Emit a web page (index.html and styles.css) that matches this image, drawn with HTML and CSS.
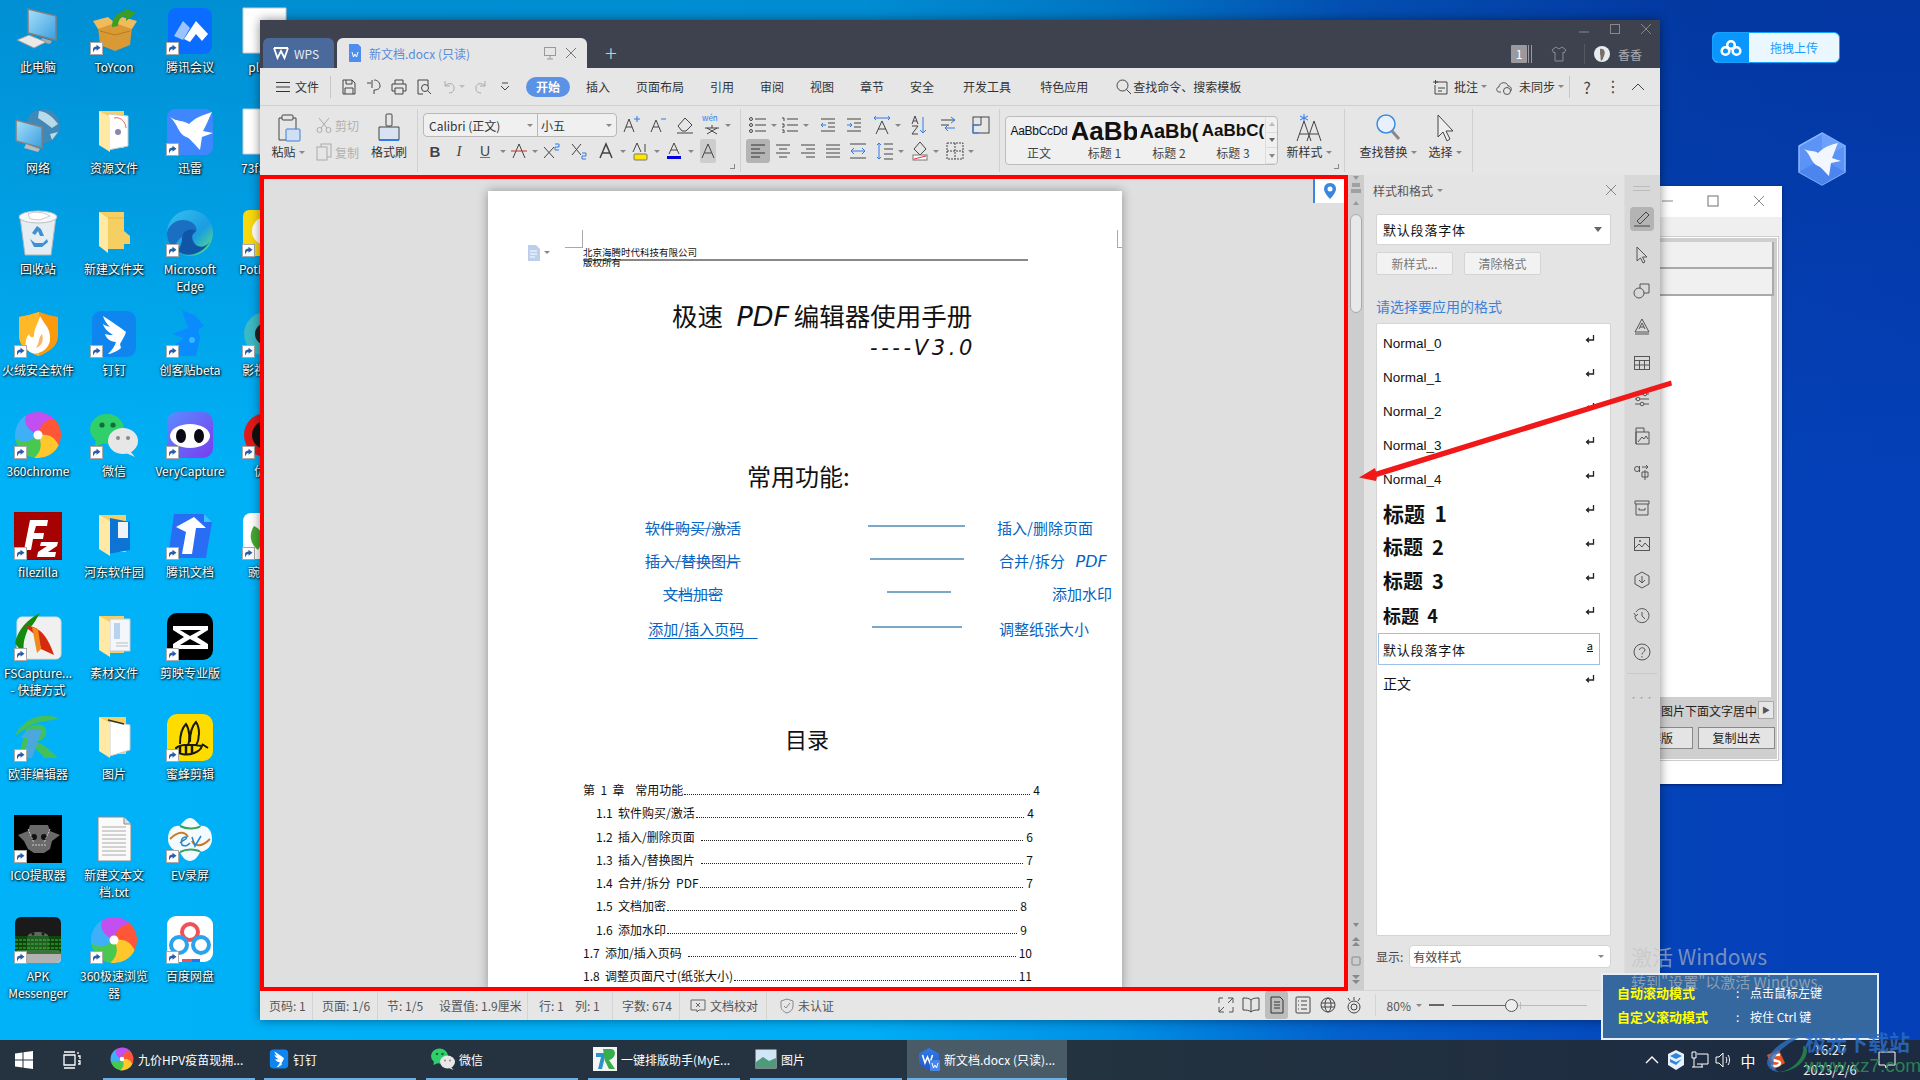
FILE: index.html
```html
<!DOCTYPE html>
<html lang="zh-CN">
<head>
<meta charset="utf-8">
<title>新文档.docx (只读) - WPS</title>
<link rel="stylesheet" href="styles.css">
</head>
<body>
<svg class="sprite" xmlns="http://www.w3.org/2000/svg">
<defs>
<linearGradient id="g-scr" x1="0" y1="0" x2="1" y2="1"><stop offset="0" stop-color="#a8e0fa"/><stop offset="1" stop-color="#3a9ee0"/></linearGradient>
<linearGradient id="g-edge" x1="0" y1="0" x2="1" y2="1"><stop offset="0" stop-color="#35c1f1"/><stop offset=".6" stop-color="#1b9de2"/><stop offset="1" stop-color="#66eb6e"/></linearGradient>
<linearGradient id="g-panda" x1="0" y1="0" x2="1" y2="1"><stop offset="0" stop-color="#5a8cff"/><stop offset="1" stop-color="#7a3cf0"/></linearGradient>
<linearGradient id="g-wps" x1="0" y1="0" x2="0" y2="1"><stop offset="0" stop-color="#2f7be8"/><stop offset="1" stop-color="#2458c8"/></linearGradient>
</defs>
<symbol id="sc" viewBox="0 0 13 13"><rect x=".5" y=".5" width="12" height="12" fill="#fff" stroke="#aaa"/><path d="M3 10.5V7.5C3 5.5 4.5 4.6 6.5 4.6V2.8L10.5 5.8 6.5 8.8V7C5 7 4.2 8 3 10.5Z" fill="#2d5da8"/></symbol>
<symbol id="i-pc" viewBox="0 0 48 48"><path d="M14 2 42 9V33L14 26Z" fill="url(#g-scr)" stroke="#808080" stroke-width="1.5"/><path d="M28 31 27 35 36 37 38 34Z" fill="#aaa"/><path d="M3 33 15 28 32 35 20 41Z" fill="#e9e9e9" stroke="#9a9a9a"/></symbol>
<symbol id="i-toy" viewBox="0 0 48 48"><path d="M8 20 25 16 42 20 40 38 25 44 10 38Z" fill="#d99a35"/><path d="M3 14 18 10 25 16 8 22Z M47 14 32 10 25 16 42 22Z" fill="#f0bb5c"/><path d="M10 24 25 28 40 24" fill="none" stroke="#b87c22"/><path d="M22 20C22 8 30 4 36 5L34 1 46 6 36 14 36 9C31 9 28 13 28 19Z" fill="#3c9d1e"/></symbol>
<symbol id="i-meet" viewBox="0 0 48 48"><rect x="2" y="1" width="44" height="46" rx="8" fill="#0a6dff"/><path d="M8 29 17 14 24 21 17 33Z" fill="#9cc2ff"/><path d="M18 32 30 14 42 27 36 34 30 27 24 35Z" fill="#fff"/></symbol>
<symbol id="i-net" viewBox="0 0 48 48"><circle cx="29" cy="18" r="17" fill="#3f89b8"/><path d="M25 3C33 4 38 8 44 16L38 20 30 14 24 10Z M36 26 44 24 38 32Z" fill="#b9dbe9"/><path d="M2 12 28 19V40L2 33Z" fill="url(#g-scr)" stroke="#808080" stroke-width="1.5"/><path d="M12 36 10 40 24 44 26 41Z" fill="#bbb"/></symbol>
<symbol id="i-bird" viewBox="0 0 48 48"><rect x="1" y="1" width="46" height="46" rx="8" fill="#3f86ff"/><path d="M4 9C11 14 17 12 23 16 29 10 34 8 46 4 42 12 40 18 37 23L47 25 36 29 34 42C28 36 24 30 20 29 12 26 12 16 4 9Z" fill="#fff"/></symbol>
<symbol id="i-folder" viewBox="0 0 48 48"><path d="M9 3H34V40H18Z" fill="#f5cf62"/><path d="M34 22 40 27V35H26L34 30Z" fill="#f5cf62"/><path d="M9 3 18 9V44L9 37Z" fill="#ffe9a4"/><path d="M18 9H34" stroke="#e2b94a"/></symbol>
<symbol id="i-fdoc" viewBox="0 0 48 48"><path d="M9 3H34V40H18Z" fill="#f5cf62"/><path d="M20 6H40V38H20Z" fill="#f3f6fa" stroke="#c8ccd0"/><path d="M24 10H30V26H24Z" fill="#b9d3ee"/><path d="M26 30H38M26 33H38" stroke="#bbb"/><path d="M9 3 20 9V44L9 37Z" fill="#ffe9a4"/></symbol>
<symbol id="i-fres" viewBox="0 0 48 48"><path d="M9 3H34V40H18Z" fill="#f5cf62"/><path d="M18 6 38 8V38L18 42Z" fill="#fff" stroke="#ccc"/><circle cx="28" cy="24" r="3" fill="#88a"/><path d="M24 10C32 8 36 16 36 20" stroke="#d66" fill="none"/><path d="M9 3 20 9V44L9 37Z" fill="#ffe9a4"/></symbol>
<symbol id="i-fblue" viewBox="0 0 48 48"><path d="M9 3H36V40H18Z" fill="#f5cf62"/><path d="M20 6 40 10V38L18 42Z" fill="#0e74d4"/><rect x="28" y="10" width="10" height="16" fill="#eef3f8"/><path d="M9 3 20 9V44L9 37Z" fill="#ffe9a4"/></symbol>
<symbol id="i-fpic" viewBox="0 0 48 48"><path d="M9 3H36V40H18Z" fill="#f5cf62"/><path d="M20 7 40 11V36L20 42Z" fill="#fff" stroke="#ccc"/><path d="M18 6 34 10" stroke="#333" stroke-width="1.5"/><path d="M9 3 20 9V44L9 37Z" fill="#ffe9a4"/></symbol>
<symbol id="i-recycle" viewBox="0 0 48 48"><path d="M6 8 42 8 37 46H11Z" fill="#e5edf2" stroke="#a9b6bd"/><ellipse cx="24" cy="8" rx="19" ry="6" fill="#f6f8f9" stroke="#b6c1c6"/><path d="M14 5 20 3 30 4 36 7 26 11 16 10Z" fill="#fff" stroke="#ccc"/><path d="M18 24 23 17 27 20 30 27 26 27 24 22 21 26Z M16 30 21 34 29 34 33 30 34 33 28 38H20Z" fill="#3f8fd2"/></symbol>
<symbol id="i-edge" viewBox="0 0 48 48"><circle cx="24" cy="24" r="23" fill="url(#g-edge)"/><path d="M1 24C4 10 20 8 28 15 33 20 30 26 24 26 14 26 8 34 10 41 4 37 1 31 1 24Z" fill="#1a6fc2"/><path d="M16 30C16 22 24 18 30 22 26 24 24 30 30 36 36 40 42 36 44 32 38 44 22 50 12 42 14 38 16 34 16 30Z" fill="#0f56a6"/></symbol>
<symbol id="i-shield" viewBox="0 0 48 48"><path d="M5 7C12 6 18 4 25 2 32 4 37 6 44 7V26C44 36 35 42 25 46 14 42 5 36 5 26Z" fill="#fb9a0d"/><path d="M5 7C12 6 18 4 25 2V46C14 42 5 36 5 26Z" fill="#ffb928"/><path d="M26 6C30 14 37 18 36 30 35 40 24 45 18 43 10 40 10 30 15 24 16 28 19 28 20 26 20 18 24 14 26 6Z" fill="#fff"/><path d="M28 24C30 30 28 36 22 38 26 32 24 28 28 24Z" fill="#fbb46a"/></symbol>
<symbol id="i-ding" viewBox="0 0 48 48"><rect x="2" y="1" width="44" height="46" rx="9" fill="#0f85f0"/><path d="M13 6C22 12 30 17 36 22 35 26 32 30 30 34L31 38C26 42 20 44 18 44 22 40 25 36 26 32 20 32 16 28 15 24 18 25 21 25 23 25 18 22 14 18 13 14 16 16 18 16 20 17 16 13 14 10 13 6Z" fill="#fff"/></symbol>
<symbol id="i-ck" viewBox="0 0 48 48"><path d="M16 0 30 6 38 16 32 20 34 28 30 46H14L10 34 18 28 12 26 6 24 22 18Z" fill="#0a8cff"/><circle cx="26" cy="30" r="3" fill="#36b8ff"/></symbol>
<symbol id="i-swirl" viewBox="0 0 48 48"><g id="swirl-g"><path transform="rotate(243 24 24)" d="M24 24C20 14 22 4 30 1.8A23 23 0 0 1 47 24C40 18 32 18 24 24Z" fill="#3fb0f7"/><path transform="rotate(171 24 24)" d="M24 24C20 14 22 4 30 1.8A23 23 0 0 1 47 24C40 18 32 18 24 24Z" fill="#48c850"/><path transform="rotate(99 24 24)" d="M24 24C20 14 22 4 30 1.8A23 23 0 0 1 47 24C40 18 32 18 24 24Z" fill="#ffc72b"/><path transform="rotate(27 24 24)" d="M24 24C20 14 22 4 30 1.8A23 23 0 0 1 47 24C40 18 32 18 24 24Z" fill="#ff5638"/><path transform="rotate(-45 24 24)" d="M24 24C20 14 22 4 30 1.8A23 23 0 0 1 47 24C40 18 32 18 24 24Z" fill="#c24fef"/></g><circle cx="24" cy="24" r="4.5" fill="#fff"/></symbol>
<symbol id="i-wechat" viewBox="0 0 48 48"><ellipse cx="17" cy="18" rx="17" ry="15" fill="#2fd06b"/><path d="M6 28 5 36 14 32Z" fill="#2fd06b"/><circle cx="12" cy="14" r="2.6" fill="#156b37"/><circle cx="23" cy="14" r="2.6" fill="#156b37"/><ellipse cx="33" cy="30" rx="15" ry="13" fill="#e7e7e7"/><path d="M40 40 45 46 36 42Z" fill="#e7e7e7"/><circle cx="28" cy="27" r="2" fill="#888"/><circle cx="38" cy="27" r="2" fill="#888"/></symbol>
<symbol id="i-panda" viewBox="0 0 48 48"><rect x="1" y="1" width="46" height="46" rx="10" fill="url(#g-panda)"/><ellipse cx="24" cy="25" rx="20" ry="12" fill="#fff"/><ellipse cx="15" cy="25" rx="5" ry="7" fill="#0a0a14"/><ellipse cx="33" cy="25" rx="5" ry="7" fill="#0a0a14"/></symbol>
<symbol id="i-tdoc" viewBox="0 0 48 48"><path d="M8 2H38L46 10 40 46H2Z" fill="#2a6df5"/><path d="M38 2 46 10H38Z" fill="#36c5ff"/><path d="M10 15 28 5 40 16H30L26 42H16L20 20Z" fill="#fff"/></symbol>
<symbol id="i-fsc" viewBox="0 0 48 48"><rect x="3" y="4" width="44" height="42" rx="5" fill="#f0f0f0" stroke="#ddd"/><path d="M1 30C4 16 14 6 26 0 22 6 20 12 14 16 10 26 8 32 11 44Z" fill="#138c0e"/><path d="M10 14C22 10 34 22 40 42L27 36C26 28 20 18 10 14Z" fill="#d52a0c"/><path d="M18 14 23 40 27 36 24 16Z" fill="#f08a1c"/></symbol>
<symbol id="i-capcut" viewBox="0 0 48 48"><rect x="1" y="0" width="46" height="47" rx="10" fill="#000"/><path d="M7 13H42V17L31 24 42 31V36H7V31L18 24 7 17ZM14 17 24 23 35 17ZM14 32H35L24 26Z" fill="#fff"/></symbol>
<symbol id="i-ofei" viewBox="0 0 48 48"><path d="M1 22C8 4 30-2 44 4 40 8 24 4 10 16 20 8 34 8 32 20 30 26 24 28 22 28 30 30 36 36 44 44H30C26 38 22 34 18 33L16 44H4L12 14Z" fill="#43c05c"/><path d="M14 16H28L18 44H10L14 24H6Z" fill="#4ba8dc"/></symbol>
<symbol id="i-bee" viewBox="0 0 48 48"><rect x="1" y="0" width="46" height="47" rx="10" fill="#ffdc00"/><path d="M14 30C14 18 18 12 20 10 24 16 24 26 22 32M24 28C24 16 28 10 30 8 34 14 34 24 30 32M10 34C14 30 24 30 36 32 34 38 24 42 16 40 12 40 10 36 10 34ZM36 30 42 34" fill="none" stroke="#1a1a00" stroke-width="2"/><path d="M14 32V40M20 31V41M26 31V40" stroke="#1a1a00" stroke-width="2.5"/></symbol>
<symbol id="i-ico" viewBox="0 0 48 48"><rect width="48" height="48" fill="#000"/><path d="M16 10H34L36 16 46 20 38 26 36 34 30 38H20L14 34 10 26 4 20 14 16Z" fill="#6a6a6a"/><circle cx="20" cy="22" r="3" fill="#111"/><circle cx="30" cy="22" r="3" fill="#111"/><path d="M18 30H32M14 14 20 28M36 14 30 28" stroke="#ccc" stroke-dasharray="2 1" fill="none"/></symbol>
<symbol id="i-txt" viewBox="0 0 48 48"><path d="M8 2H34L41 9V46H8Z" fill="#fafafa" stroke="#8a8a8a"/><path d="M34 2V9H41" fill="#ddd" stroke="#8a8a8a"/><path d="M12 12H36M12 16H36M12 20H36M12 24H36M12 28H36M12 32H36M12 36H36M12 40H36" stroke="#a9a9a9"/></symbol>
<symbol id="i-apk" viewBox="0 0 48 48"><rect x="1" y="1" width="46" height="46" rx="6" fill="#1a1a1a"/><rect x="1" y="34" width="46" height="13" rx="4" fill="#d8d8d8" opacity=".8"/><path d="M13 22C13 14 35 14 35 22V34H13Z" fill="#5f6a5f"/><path d="M1 20H47V38H1Z" fill="#0a5a0a" opacity=".7"/><path d="M1 24H47M1 28H47M1 32H47" stroke="#33ee33" stroke-dasharray="3 1" opacity=".8"/><circle cx="19" cy="18" r="1.5" fill="#1a1a1a"/><circle cx="29" cy="18" r="1.5" fill="#1a1a1a"/></symbol>
<symbol id="i-baidu" viewBox="0 0 48 48"><rect x="1" y="0" width="46" height="46" rx="9" fill="#fff"/><circle cx="24" cy="16" r="8" fill="none" stroke="#f14f5a" stroke-width="4"/><circle cx="13" cy="29" r="8" fill="none" stroke="#2aa2ef" stroke-width="4"/><circle cx="35" cy="29" r="8" fill="none" stroke="#2aa2ef" stroke-width="4"/><path d="M16 43H26V46H16Z" fill="#f14f5a"/><path d="M26 43H34V46H26Z" fill="#2a72ef"/></symbol>
<symbol id="i-doc" viewBox="0 0 48 48"><path d="M1 1H44V46H1Z" fill="#fff" stroke="#ccc"/></symbol>
<symbol id="i-pot" viewBox="0 0 48 48"><rect x="1" y="1" width="46" height="46" rx="6" fill="#f8d80e"/><circle cx="24" cy="22" r="14" fill="#fff"/></symbol>
<symbol id="i-film" viewBox="0 0 48 48"><circle cx="24" cy="24" r="22" fill="#3bb9c4"/><circle cx="24" cy="24" r="11" fill="#222"/></symbol>
<symbol id="i-red" viewBox="0 0 48 48"><circle cx="24" cy="24" r="22" fill="#e01a1a"/><circle cx="24" cy="24" r="14" fill="#111"/></symbol>
<symbol id="i-pea" viewBox="0 0 48 48"><rect x="1" y="1" width="46" height="46" rx="8" fill="#fff"/><path d="M12 14C22 18 22 30 16 38 6 30 8 20 12 14Z" fill="#46a832"/></symbol>
<symbol id="i-wpshex" viewBox="0 0 24 24"><path d="M12 1 22 6.5V17.5L12 23 2 17.5V6.5Z" fill="url(#g-wps)"/><path d="M5.5 8 8 16 10.5 10 13 16 15.5 8" fill="none" stroke="#fff" stroke-width="1.6"/><rect x="13" y="13" width="10" height="11" rx="1" fill="#4a86ea"/><path d="M15 16 16.5 21 18 18 19.5 21 21 16" fill="none" stroke="#fff"/></symbol>
<symbol id="i-ret" viewBox="0 0 12 12"><path d="M9.5 2V7H3M5 4.8 2.5 7 5 9.2" fill="none" stroke="#222" stroke-width="1.3"/></symbol>
</svg>

<main class="desktop">
  <div class="dgrid">
    <div class="dt"><div class="dw"><svg class="di"><use href="#i-pc"/></svg></div><span class="dl">此电脑</span></div>
    <div class="dt"><div class="dw"><svg class="di"><use href="#i-net"/></svg></div><span class="dl">网络</span></div>
    <div class="dt"><div class="dw"><svg class="di"><use href="#i-recycle"/></svg></div><span class="dl">回收站</span></div>
    <div class="dt"><div class="dw"><svg class="di"><use href="#i-shield"/></svg><svg class="sc"><use href="#sc"/></svg></div><span class="dl">火绒安全软件</span></div>
    <div class="dt"><div class="dw"><svg class="di"><use href="#i-swirl"/></svg><svg class="sc"><use href="#sc"/></svg></div><span class="dl">360chrome</span></div>
    <div class="dt"><div class="dw"><svg class="di" viewBox="0 0 48 48"><rect width="48" height="48" fill="#a60202" stroke="#7a0000" stroke-dasharray="2 2"/><path d="M10 38 16 8H34L33 14H22L20 21H30L29 27H19L17 38ZM27 30H44L43 34 34 40H42L41 45H23L24 40 33 34H26Z" fill="#fff"/></svg><svg class="sc"><use href="#sc"/></svg></div><span class="dl">filezilla</span></div>
    <div class="dt"><div class="dw"><svg class="di"><use href="#i-fsc"/></svg><svg class="sc"><use href="#sc"/></svg></div><span class="dl">FSCapture...<br>- 快捷方式</span></div>
    <div class="dt"><div class="dw"><svg class="di"><use href="#i-ofei"/></svg><svg class="sc"><use href="#sc"/></svg></div><span class="dl">欧菲编辑器</span></div>
    <div class="dt"><div class="dw"><svg class="di"><use href="#i-ico"/></svg><svg class="sc"><use href="#sc"/></svg></div><span class="dl">ICO提取器</span></div>
    <div class="dt"><div class="dw"><svg class="di"><use href="#i-apk"/></svg><svg class="sc"><use href="#sc"/></svg></div><span class="dl">APK<br>Messenger</span></div>

    <div class="dt"><div class="dw"><svg class="di"><use href="#i-toy"/></svg><svg class="sc"><use href="#sc"/></svg></div><span class="dl">ToYcon</span></div>
    <div class="dt"><div class="dw"><svg class="di"><use href="#i-fres"/></svg></div><span class="dl">资源文件</span></div>
    <div class="dt"><div class="dw"><svg class="di"><use href="#i-folder"/></svg></div><span class="dl">新建文件夹</span></div>
    <div class="dt"><div class="dw"><svg class="di"><use href="#i-ding"/></svg><svg class="sc"><use href="#sc"/></svg></div><span class="dl">钉钉</span></div>
    <div class="dt"><div class="dw"><svg class="di"><use href="#i-wechat"/></svg><svg class="sc"><use href="#sc"/></svg></div><span class="dl">微信</span></div>
    <div class="dt"><div class="dw"><svg class="di"><use href="#i-fblue"/></svg></div><span class="dl">河东软件园</span></div>
    <div class="dt"><div class="dw"><svg class="di"><use href="#i-fdoc"/></svg></div><span class="dl">素材文件</span></div>
    <div class="dt"><div class="dw"><svg class="di"><use href="#i-fpic"/></svg></div><span class="dl">图片</span></div>
    <div class="dt"><div class="dw"><svg class="di"><use href="#i-txt"/></svg></div><span class="dl">新建文本文<br>档.txt</span></div>
    <div class="dt"><div class="dw"><svg class="di"><use href="#i-swirl"/></svg><svg class="sc"><use href="#sc"/></svg></div><span class="dl">360极速浏览<br>器</span></div>

    <div class="dt"><div class="dw"><svg class="di"><use href="#i-meet"/></svg><svg class="sc"><use href="#sc"/></svg></div><span class="dl">腾讯会议</span></div>
    <div class="dt"><div class="dw"><svg class="di"><use href="#i-bird"/></svg><svg class="sc"><use href="#sc"/></svg></div><span class="dl">迅雷</span></div>
    <div class="dt"><div class="dw"><svg class="di"><use href="#i-edge"/></svg><svg class="sc"><use href="#sc"/></svg></div><span class="dl">Microsoft<br>Edge</span></div>
    <div class="dt"><div class="dw"><svg class="di"><use href="#i-ck"/></svg><svg class="sc"><use href="#sc"/></svg></div><span class="dl">创客贴beta</span></div>
    <div class="dt"><div class="dw"><svg class="di"><use href="#i-panda"/></svg><svg class="sc"><use href="#sc"/></svg></div><span class="dl">VeryCapture</span></div>
    <div class="dt"><div class="dw"><svg class="di"><use href="#i-tdoc"/></svg><svg class="sc"><use href="#sc"/></svg></div><span class="dl">腾讯文档</span></div>
    <div class="dt"><div class="dw"><svg class="di"><use href="#i-capcut"/></svg><svg class="sc"><use href="#sc"/></svg></div><span class="dl">剪映专业版</span></div>
    <div class="dt"><div class="dw"><svg class="di"><use href="#i-bee"/></svg><svg class="sc"><use href="#sc"/></svg></div><span class="dl">蜜蜂剪辑</span></div>
    <div class="dt"><div class="dw"><svg class="di" viewBox="0 0 48 48"><path d="M24 3C28 3 32 8 34 11 40 10 46 14 46 24 46 32 40 36 34 37 32 42 28 46 24 46 20 46 16 42 14 37 8 36 2 32 2 24 2 14 8 10 14 11 16 8 20 3 24 3Z" fill="#f4fbff"/><path d="M4 24C14 14 20 18 22 22M44 24C34 34 28 30 26 26" stroke="#ca7b1e" fill="none" stroke-width="2"/><path d="M14 11C24 16 34 12 34 11M14 37C24 32 34 36 34 37" stroke="#3aa060" fill="none" stroke-width="2"/><path d="M14 28C18 24 22 24 20 22 16 22 14 26 16 30 20 32 22 30 24 28M26 22 29 31 35 21" fill="none" stroke="#2a8ac8" stroke-width="1.6"/></svg><svg class="sc"><use href="#sc"/></svg></div><span class="dl">EV录屏</span></div>
    <div class="dt"><div class="dw"><svg class="di"><use href="#i-baidu"/></svg><svg class="sc"><use href="#sc"/></svg></div><span class="dl">百度网盘</span></div>

    <div class="dt"><div class="dw"><svg class="di"><use href="#i-doc"/></svg></div><span class="dl">plugin</span></div>
    <div class="dt"><div class="dw"><svg class="di"><use href="#i-doc"/></svg></div><span class="dl">73f38ca2</span></div>
    <div class="dt"><div class="dw"><svg class="di"><use href="#i-pot"/></svg><svg class="sc"><use href="#sc"/></svg></div><span class="dl">PotPlayer</span></div>
    <div class="dt"><div class="dw"><svg class="di"><use href="#i-film"/></svg><svg class="sc"><use href="#sc"/></svg></div><span class="dl">影视大全</span></div>
    <div class="dt"><div class="dw"><svg class="di"><use href="#i-red"/></svg><svg class="sc"><use href="#sc"/></svg></div><span class="dl">优酷</span></div>
    <div class="dt"><div class="dw"><svg class="di"><use href="#i-pea"/></svg><svg class="sc"><use href="#sc"/></svg></div><span class="dl">豌豆荚</span></div>
  </div>

  <div class="upload">
    <span class="upload-ico"><svg width="22" height="18" viewBox="0 0 22 18"><g fill="none" stroke="#fff" stroke-width="2.6"><circle cx="11" cy="6" r="3.8"/><circle cx="5.5" cy="12" r="3.8"/><circle cx="16.5" cy="12" r="3.8"/></g></svg></span>
    <span class="upload-txt">拖拽上传</span>
  </div>
  <svg class="float-bird" width="50" height="54" viewBox="0 0 50 54"><path d="M25 1 48 14V40L25 53 2 40V14Z" fill="#5b93f7" stroke="#8db6fb" stroke-width="1.5"/><path d="M25 1 48 14 25 27Z" fill="#6ea2fa"/><path d="M2 40 25 27 48 40 25 53Z" fill="#4d85ef"/><path d="M7 17C13 20 17 18 21 21 27 15 33 13 41 11 38 17 37 22 35 26L44 29 34 31 32 44C27 39 24 35 21 34 14 31 14 23 7 17Z" fill="#f2f6ff"/></svg>

  <section class="bgwin">
    <div class="bg-title">
      <svg width="12" height="12" viewBox="0 0 12 12" class="bg-min"><path d="M0 6H11" stroke="#999" stroke-width="1.2"/></svg>
      <svg width="12" height="12" viewBox="0 0 12 12" class="bg-max"><rect x="1" y="1" width="10" height="10" fill="none" stroke="#888" stroke-width="1.2"/></svg>
      <svg width="12" height="12" viewBox="0 0 12 12" class="bg-close"><path d="M1 1 11 11M11 1 1 11" stroke="#888"/></svg>
    </div>
    <div class="bg-body">
      <div class="bg-frame">
        <div class="bg-row"></div>
        <div class="bg-row"></div>
        <div class="bg-white"></div>
        <div class="bg-foot">
          <div class="bg-line"><span>图片下面文字居中</span><span class="bg-next">▶</span></div>
          <div class="bg-btns"><span class="bg-btn b1">排版</span><span class="bg-btn b2">复制出去</span></div>
        </div>
      </div>
    </div>
  </section>

  <section class="wps">
    <header class="titlebar">
      <div class="tab-wps"><svg width="16" height="14" viewBox="0 0 16 14"><path d="M1 2 4.5 12 8 5 11.5 12 15 2M1 2H15" fill="none" stroke="#fff" stroke-width="1.8"/></svg><span>WPS</span></div>
      <div class="tab-doc">
        <svg width="14" height="20" viewBox="0 0 14 20"><path d="M1 1H10L13 4V19H1Z" fill="#4d8df0"/><path d="M4 9 5.5 14 7 11 8.5 14 10 9" fill="none" stroke="#fff"/></svg>
        <span class="tab-name">新文档.docx (只读)</span>
        <svg class="tab-pin" width="14" height="14" viewBox="0 0 14 14"><rect x="1.5" y="1.5" width="11" height="8" fill="none" stroke="#999"/><path d="M7 9.5V13M4 13H10" stroke="#999"/></svg>
        <svg class="tab-x" width="12" height="12" viewBox="0 0 12 12"><path d="M1 1 11 11M11 1 1 11" stroke="#777"/></svg>
      </div>
      <span class="tab-plus">+</span>
      <div class="title-right">
        <div class="winbtns">
          <svg width="12" height="12" viewBox="0 0 12 12"><path d="M1 9H11" stroke="#888"/></svg>
          <svg width="12" height="12" viewBox="0 0 12 12"><rect x="1.5" y="1.5" width="9" height="9" fill="none" stroke="#888"/></svg>
          <svg width="12" height="12" viewBox="0 0 12 12"><path d="M1 1 11 11M11 1 1 11" stroke="#888"/></svg>
        </div>
        <div class="userbar">
          <span class="badge1">1</span><span class="badge-lines"></span>
          <svg class="shirt" width="16" height="16" viewBox="0 0 16 16"><path d="M5 1 1 4 3 7 4 6V15H12V6L13 7 15 4 11 1 8 3Z" fill="none" stroke="#8a8d96"/></svg>
          <span class="usep"></span>
          <svg class="avatar" width="16" height="16" viewBox="0 0 16 16"><circle cx="8" cy="8" r="8" fill="#e9ecef"/><path d="M6 3C10 2 12 6 10 10 9 12 9 14 7 15 6 12 7 10 6 8Z" fill="#776f6a"/></svg>
          <span class="uname">香香</span>
        </div>
      </div>
    </header>

    <nav class="menubar">
      <svg class="mi-burger" width="16" height="12" viewBox="0 0 16 12"><path d="M1 1.5H15M1 6H15M1 10.5H15" stroke="#333"/></svg>
      <span class="mfile">文件</span><span class="msep"></span>
      <span class="qi"><svg width="18" height="18" viewBox="0 0 18 18"><path d="M3 2H12L15 5V16H3ZM6 2V6H12V2M5 16V10H13V16" fill="none" stroke="#444"/></svg></span>
      <span class="qi"><svg width="18" height="18" viewBox="0 0 18 18"><path d="M2 5H6M9 2C13 2 15 5 15 8S12 12 9 12V16M7 2V10" fill="none" stroke="#444"/></svg></span>
      <span class="qi"><svg width="18" height="18" viewBox="0 0 18 18"><path d="M5 6V2H13V6M5 13H2V6H16V13H13M5 10H13V16H5Z" fill="none" stroke="#444"/></svg></span>
      <span class="qi"><svg width="18" height="18" viewBox="0 0 18 18"><path d="M13 8V2H3V16H8" fill="none" stroke="#444"/><circle cx="10" cy="10" r="3.5" fill="none" stroke="#444"/><path d="M12.5 12.5 16 16" stroke="#444"/></svg></span>
      <span class="qi qi-dis"><svg width="18" height="18" viewBox="0 0 18 18"><path d="M5 3V8H10M5 8C8 4 15 5 14 11 14 14 11 15 9 15" fill="none" stroke="#aaa"/></svg><i class="caret lite"></i></span>
      <span class="qi"><svg width="18" height="18" viewBox="0 0 18 18"><path d="M13 3V8H8M13 8C10 4 3 5 4 11 4 14 7 15 9 15" fill="none" stroke="#aaa"/></svg></span>
      <span class="qi qi-more"><svg width="12" height="12" viewBox="0 0 12 12"><path d="M3 2H9M2 5 6 9 10 5" fill="none" stroke="#444"/></svg></span>
      <span class="mpill">开始</span>
      <span class="mtab">插入</span><span class="mtab">页面布局</span><span class="mtab">引用</span><span class="mtab">审阅</span><span class="mtab">视图</span><span class="mtab">章节</span><span class="mtab">安全</span><span class="mtab mtab-s">开发工具</span><span class="mtab mtab-s">特色应用</span>
      <svg class="msearch" width="16" height="16" viewBox="0 0 16 16"><circle cx="6.5" cy="6.5" r="5.5" fill="none" stroke="#444"/><path d="M10.5 10.5 15 15" stroke="#444"/></svg>
      <span class="mtext">查找命令、搜索模板</span>
      <div class="mright">
        <svg width="16" height="16" viewBox="0 0 16 16"><path d="M3 3H14V15H2V6M0 3H5M2.5 1V5M5 9H12M5 12H9" fill="none" stroke="#444"/></svg>
        <span class="mtext">批注</span><i class="caret"></i>
        <svg class="mr-cloud" width="18" height="16" viewBox="0 0 18 16"><path d="M5 13H3C0 13 0 8 3 8 3 3 11 2 12 7 15 7 16 10 15 12" fill="none" stroke="#555"/><circle cx="11" cy="12" r="3.5" fill="none" stroke="#555"/></svg>
        <span class="mtext">未同步</span><i class="caret"></i>
        <span class="msep2"></span>
        <span class="mq">?</span><span class="mdots">⋮</span>
        <svg width="14" height="10" viewBox="0 0 14 10"><path d="M1 8 7 2 13 8" fill="none" stroke="#444"/></svg>
      </div>
    </nav>

    <div class="toolbar">
      <div class="grp g-clip">
        <div class="bigcol c-paste">
          <svg width="26" height="30" viewBox="0 0 26 30"><path d="M4 5H21V27H4Z" fill="none" stroke="#444"/><rect x="7" y="2" width="11" height="5" rx="1" fill="#e6e6e6" stroke="#444"/><rect x="11" y="16" width="14" height="12" rx="1" fill="#cfe0f5" stroke="#3b7ed8"/></svg>
          <span class="biglab">粘贴<i class="caret"></i></span>
        </div>
        <div class="clipcol">
          <span class="clipitem"><svg width="16" height="16" viewBox="0 0 16 16"><path d="M3 1 11 11M13 1 5 11" stroke="#aaa"/><circle cx="3.5" cy="13" r="2.5" fill="none" stroke="#aaa"/><circle cx="12.5" cy="13" r="2.5" fill="none" stroke="#aaa"/></svg>剪切</span>
          <span class="clipitem"><svg width="16" height="18" viewBox="0 0 16 18"><rect x="5" y="1" width="10" height="13" fill="none" stroke="#aaa"/><rect x="1" y="4" width="10" height="13" fill="#e6e6e6" stroke="#aaa"/></svg>复制</span>
        </div>
        <div class="bigcol c-brush">
          <svg width="24" height="30" viewBox="0 0 24 30"><rect x="9" y="1" width="6" height="12" rx="1" fill="none" stroke="#444"/><path d="M2 14H22V27H2Z" fill="#d8e2f0" stroke="#444"/><path d="M2 27H22" stroke="#2f7be8" stroke-width="2"/></svg>
          <span class="biglab">格式刷</span>
        </div>
      </div>

      <div class="grp g-font">
        <div class="row">
          <div class="combo"><span class="cb-a">Calibri (正文)<i class="caret"></i></span><span class="cb-b">小五<i class="caret"></i></span></div>
          <span class="tb w26"><svg width="20" height="20" viewBox="0 0 20 20"><path d="M2 17 7 4 12 17M4 12H10" fill="none" stroke="#444"/><path d="M12 4H18M15 1V7" stroke="#2f7be8"/></svg></span>
          <span class="tb w26"><svg width="20" height="20" viewBox="0 0 20 20"><path d="M3 17 8 5 13 17M5 12H11" fill="none" stroke="#444"/><path d="M13 4H18" stroke="#2f7be8"/></svg></span>
          <span class="tb w28"><svg width="18" height="18" viewBox="0 0 18 18"><path d="M9 2 16 9 10 15H6L2 10ZM1 17H17" fill="none" stroke="#444"/></svg></span>
          <span class="tb w26"><svg width="20" height="20" viewBox="0 0 20 20"><path d="M3 13H17M10 10V13M5 19 15 13M5 13 15 19" fill="none" stroke="#444"/></svg><b class="wen">wén</b></span><i class="caret"></i>
        </div>
        <div class="row">
          <span class="tb w24 fmt-b">B</span>
          <span class="tb w24 fmt-i">I</span>
          <span class="tb w28 fmt-u">U</span><i class="caret cw8"></i>
          <span class="tb w24"><svg width="18" height="18" viewBox="0 0 18 18"><path d="M3 16 9 2 15 16" fill="none" stroke="#444"/><path d="M1 9H17" stroke="#c63030"/></svg></span><i class="caret cw8"></i>
          <span class="tb w26"><svg width="18" height="18" viewBox="0 0 18 18"><path d="M1 5 11 16M11 5 1 16" stroke="#444" fill="none"/><path d="M12 2H16V5H12V8H16" fill="none" stroke="#2f7be8"/></svg></span>
          <span class="tb w29"><svg width="18" height="18" viewBox="0 0 18 18"><path d="M1 2 10 13M10 2 1 13" stroke="#444" fill="none"/><path d="M11 11H15V14H11V17H15" fill="none" stroke="#2f7be8"/></svg></span>
          <span class="tb w24"><svg width="18" height="18" viewBox="0 0 18 18"><path d="M3 16 9 2 15 16M5 11H13" fill="none" stroke="#444" stroke-width="1.5"/></svg></span><i class="caret cw10"></i>
          <span class="tb w24"><svg width="18" height="20" viewBox="0 0 18 20"><path d="M2 11 6 2 10 11M14 3V11" fill="none" stroke="#444"/><rect x="3" y="13" width="13" height="6" rx="1" fill="#ffe600" stroke="#777"/></svg></span><i class="caret cw10"></i>
          <span class="tb w24"><svg width="18" height="20" viewBox="0 0 18 20"><path d="M4 13 9 2 14 13M6 9H12" fill="none" stroke="#444"/><rect x="2" y="15" width="14" height="3" fill="#0000e0"/></svg></span><i class="caret cw10"></i>
          <span class="tb w24 tb-shade"><svg width="16" height="18" viewBox="0 0 16 18"><path d="M2 16 8 2 14 16M4.5 11H11.5" fill="none" stroke="#444"/></svg></span>
        </div>
        <i class="launch"></i>
      </div>

      <div class="grp g-para">
        <div class="row">
          <span class="tb w24"><svg width="18" height="16" viewBox="0 0 18 16"><path d="M6 2H17M6 8H17M6 14H17" stroke="#444"/><circle cx="2" cy="2" r="1.5" fill="none" stroke="#444"/><circle cx="2" cy="8" r="1.5" fill="none" stroke="#444"/><circle cx="2" cy="14" r="1.5" fill="none" stroke="#444"/></svg></span><i class="caret cw8"></i>
          <span class="tb w24"><svg width="18" height="16" viewBox="0 0 18 16"><path d="M6 2H17M6 8H17M6 14H17M1 1H3V4M1 7H3V10H1M1 13H3V16H1" fill="none" stroke="#444"/></svg></span><i class="caret cw8"></i>
          <span class="tb w36"><svg width="16" height="16" viewBox="0 0 16 16"><path d="M1 2H15M8 6H15M8 10H15M1 14H15" stroke="#444"/><path d="M6 8H1M3 6 1 8 3 10" fill="none" stroke="#2f7be8"/></svg></span>
          <span class="tb w16"><svg width="16" height="16" viewBox="0 0 16 16"><path d="M1 2H15M8 6H15M8 10H15M1 14H15" stroke="#444"/><path d="M1 8H6M4 6 6 8 4 10" fill="none" stroke="#2f7be8"/></svg></span>
          <span class="tb w24 ml8"><svg width="20" height="20" viewBox="0 0 20 20"><path d="M4 19 10 6 16 19M6 14H14" fill="none" stroke="#444"/><path d="M2 3H18M4 1 2 3 4 5M16 1 18 3 16 5" fill="none" stroke="#2f7be8"/></svg></span><i class="caret cw8"></i>
          <span class="tb w24 ml6"><svg width="18" height="20" viewBox="0 0 18 20"><path d="M1 9 4 1 7 9M2 6H6M1 11H7L1 19H7" fill="none" stroke="#444"/><path d="M12 2V18M9 15 12 18 15 15" fill="none" stroke="#2f7be8"/></svg></span>
          <span class="tb w24 ml4"><svg width="18" height="18" viewBox="0 0 18 18"><path d="M2 4H16M2 9H10" stroke="#444"/><path d="M12 1 16 4 12 7M16 12H6M9 9 6 12 9 15" fill="none" stroke="#2f7be8"/></svg></span>
          <span class="tb w24 ml9"><svg width="18" height="18" viewBox="0 0 18 18"><rect x="1" y="1" width="16" height="16" fill="none" stroke="#444"/><path d="M9 1V9H1" fill="none" stroke="#444"/><path d="M1 9V17M1 9H7M1 17H7" fill="none" stroke="#2f7be8"/></svg></span>
        </div>
        <div class="row">
          <span class="tb w24 tb-on"><svg width="16" height="14" viewBox="0 0 16 14"><path d="M1 1H15M1 5H10M1 9H15M1 13H10" stroke="#333"/></svg></span>
          <span class="tb w26"><svg width="16" height="14" viewBox="0 0 16 14"><path d="M1 1H15M4 5H12M1 9H15M4 13H12" stroke="#444"/></svg></span>
          <span class="tb w24"><svg width="16" height="14" viewBox="0 0 16 14"><path d="M1 1H15M6 5H15M1 9H15M6 13H15" stroke="#444"/></svg></span>
          <span class="tb w26"><svg width="16" height="14" viewBox="0 0 16 14"><path d="M1 1H15M1 5H15M1 9H15M1 13H15" stroke="#444"/></svg></span>
          <span class="tb w24"><svg width="18" height="16" viewBox="0 0 18 16"><path d="M1 1H17M1 15H17" stroke="#444"/><path d="M3 8H15M5 5 2 8 5 11M13 5 16 8 13 11" fill="none" stroke="#2f7be8"/></svg></span>
          <span class="tb w24 ml3"><svg width="18" height="18" viewBox="0 0 18 18"><path d="M8 2H17M8 7H17M8 12H17M8 17H17" stroke="#444"/><path d="M3 1V17M1 3 3 1 5 3M1 15 3 17 5 15" fill="none" stroke="#2f7be8"/></svg></span><i class="caret cw8"></i>
          <span class="tb w24 ml3"><svg width="18" height="20" viewBox="0 0 18 20"><path d="M9 1 15 8 9 14 3 8Z" fill="none" stroke="#444"/><rect x="2" y="14" width="14" height="5" fill="#fff" stroke="#777"/><path d="M3 18 15 15" stroke="#d33"/></svg></span><i class="caret cw8"></i>
          <span class="tb w24 ml3"><svg width="18" height="18" viewBox="0 0 18 18"><rect x="1" y="1" width="16" height="16" fill="none" stroke="#444" stroke-dasharray="2 1"/><path d="M9 1V17M1 9H17" stroke="#444" stroke-dasharray="2 1"/></svg></span><i class="caret cw8"></i>
        </div>
      </div>

      <div class="grp g-style">
        <div class="gallery">
          <div class="gi gi0"><span class="gp p0">AaBbCcDd</span><span class="gl">正文</span></div>
          <div class="gi gi1"><span class="gp p1">AaBb</span><span class="gl">标题 1</span></div>
          <div class="gi gi2"><span class="gp p2">AaBb(</span><span class="gl">标题 2</span></div>
          <div class="gi gi3"><span class="gp p3">AaBbC(</span><span class="gl">标题 3</span></div>
          <div class="gscroll"><span class="up"></span><span class="dn"></span><span class="more"></span></div>
        </div>
        <div class="bigcol c-new">
          <svg width="28" height="30" viewBox="0 0 28 30"><path d="M2 28 9 8 16 28M4.5 21H13M12 28 19 8 26 28M15 21H23" fill="none" stroke="#444"/><path d="M9 1V9M5 3 13 7M13 3 5 7" stroke="#2f7be8"/></svg>
          <span class="biglab">新样式<i class="caret"></i></span>
        </div>
        <i class="launch"></i>
      </div>

      <div class="grp g-find">
        <div class="bigcol c-find">
          <svg width="26" height="30" viewBox="0 0 26 30"><circle cx="11" cy="11" r="9" fill="#e8f1fb" stroke="#3b8be0" stroke-width="1.5"/><path d="M17 18 24 26" stroke="#888" stroke-width="3"/></svg>
          <span class="biglab">查找替换<i class="caret"></i></span>
        </div>
        <div class="bigcol c-sel">
          <svg width="20" height="30" viewBox="0 0 20 30"><path d="M3 2V24L8 19 12 28 15 26 11 18H18Z" fill="#eee" stroke="#444"/></svg>
          <span class="biglab">选择<i class="caret"></i></span>
        </div>
      </div>
    </div>

    <div class="mainrow">
      <div class="editor">
        <article class="page">
          <i class="crop crop-l"></i><i class="crop crop-r"></i>
          <svg class="hdr-ico" width="14" height="18" viewBox="0 0 14 18"><path d="M1 1H9L13 5V17H1Z" fill="#bcd0ec"/><path d="M3 7H10M3 10H10M3 13H8" stroke="#fff"/></svg>
          <i class="caret hdr-caret"></i>
          <div class="hdr">
            <div class="hdr-co">北京海腾时代科技有限公司</div>
            <div class="hdr-rt">版权所有</div>
          </div>
          <h1 class="doc-title">极速&nbsp;&nbsp;<em>PDF</em> 编辑器使用手册</h1>
          <div class="doc-ver">----V3.0</div>
          <h2 class="doc-h2">常用功能:</h2>
          <div class="lk-row">
            <span class="lk lk-l strike">软件购买/激活</span><i class="lk-m m1"></i><span class="lk">插入/删除页面</span>
          </div>
          <div class="lk-row">
            <span class="lk lk-l strike">插入/替换图片</span><i class="lk-m m2"></i><span class="lk lk-r2">合并/拆分&nbsp;&nbsp;<em>PDF</em></span>
          </div>
          <div class="lk-row">
            <span class="lk lk-l strike">文档加密</span><i class="lk-m m3"></i><span class="lk lk-r3">添加水印</span>
          </div>
          <div class="lk-row lk-last">
            <span class="lk lk-l lk-l4"><u>添加/插入页码&nbsp;&nbsp;&nbsp;&nbsp;</u></span><i class="lk-m m4"></i><span class="lk lk-r2">调整纸张大小</span>
          </div>
          <h2 class="doc-toc">目录</h2>
          <div class="toc">
            <div class="tr r0"><span class="tt">第&nbsp;&nbsp;1&nbsp;&nbsp;章&nbsp;&nbsp;&nbsp;&nbsp;常用功能</span><i class="td"></i><span>4</span></div>
            <div class="tr r1"><span class="tt">1.1&nbsp;&nbsp;软件购买/激活</span><i class="td"></i><span>4</span></div>
            <div class="tr r2"><span class="tt">1.2&nbsp;&nbsp;插入/删除页面&nbsp;&nbsp;</span><i class="td"></i><span>6</span></div>
            <div class="tr r2"><span class="tt">1.3&nbsp;&nbsp;插入/替换图片&nbsp;&nbsp;</span><i class="td"></i><span>7</span></div>
            <div class="tr r2"><span class="tt">1.4&nbsp;&nbsp;合并/拆分&nbsp;&nbsp;PDF</span><i class="td"></i><span>7</span></div>
            <div class="tr r3"><span class="tt">1.5&nbsp;&nbsp;文档加密</span><i class="td"></i><span>8</span></div>
            <div class="tr r3"><span class="tt">1.6&nbsp;&nbsp;添加水印</span><i class="td"></i><span>9</span></div>
            <div class="tr r4"><span class="tt">1.7&nbsp;&nbsp;添加/插入页码&nbsp;&nbsp;</span><i class="td"></i><span>10</span></div>
            <div class="tr r4"><span class="tt">1.8&nbsp;&nbsp;调整页面尺寸(纸张大小)</span><i class="td"></i><span>11</span></div>
          </div>
        </article>
        <div class="pin"><svg width="14" height="18" viewBox="0 0 14 18"><path d="M7 1C3 1 1 4 1 7 1 11 7 17 7 17S13 11 13 7C13 4 11 1 7 1Z" fill="#3a86e0"/><circle cx="7" cy="7" r="2.5" fill="#fff"/></svg></div>
      </div>
      <div class="vscroll">
        <span class="vs-top"></span>
        <svg class="vs-ruler" width="12" height="12" viewBox="0 0 12 12"><path d="M2 1H10V5H2ZM1 7H11V11H1Z" fill="#a0a0a0"/></svg>
        <span class="vs-up"></span>
        <span class="vs-thumb"></span>
        <span class="vs-dn"></span>
        <svg class="vs-b1" width="12" height="12" viewBox="0 0 12 12"><path d="M6 1 10 5H2ZM6 6 10 10H2Z" fill="#888"/></svg>
        <svg class="vs-b2" width="12" height="12" viewBox="0 0 12 12"><rect x="2" y="2" width="8" height="8" rx="1" fill="none" stroke="#888"/></svg>
        <svg class="vs-b3" width="12" height="12" viewBox="0 0 12 12"><path d="M6 6 10 2H2ZM6 11 10 7H2Z" fill="#888"/></svg>
      </div>
      <aside class="panel">
        <div class="p-title"><span>样式和格式</span><i class="caret"></i><svg class="p-x" width="12" height="12" viewBox="0 0 12 12"><path d="M1 1 11 11M11 1 1 11" stroke="#888"/></svg></div>
        <div class="p-select"><span>默认段落字体</span><i class="caret dark"></i></div>
        <div class="p-btns"><span class="p-btn">新样式...</span><span class="p-btn">清除格式</span></div>
        <div class="p-link">请选择要应用的格式</div>
        <div class="p-list">
          <div class="pi"><span class="pn">Normal_0</span><svg class="rt"><use href="#i-ret"/></svg></div>
          <div class="pi"><span class="pn">Normal_1</span><svg class="rt"><use href="#i-ret"/></svg></div>
          <div class="pi"><span class="pn">Normal_2</span><svg class="rt"><use href="#i-ret"/></svg></div>
          <div class="pi"><span class="pn">Normal_3</span><svg class="rt"><use href="#i-ret"/></svg></div>
          <div class="pi"><span class="pn">Normal_4</span><svg class="rt"><use href="#i-ret"/></svg></div>
          <div class="pi"><span class="ph h1">标题&nbsp;&nbsp;1</span><svg class="rt"><use href="#i-ret"/></svg></div>
          <div class="pi"><span class="ph h2">标题&nbsp;&nbsp;2</span><svg class="rt"><use href="#i-ret"/></svg></div>
          <div class="pi"><span class="ph h3">标题&nbsp;&nbsp;3</span><svg class="rt"><use href="#i-ret"/></svg></div>
          <div class="pi"><span class="ph h4">标题&nbsp;&nbsp;4</span><svg class="rt"><use href="#i-ret"/></svg></div>
          <div class="pi sel"><span class="pd">默认段落字体</span><span class="pa">a</span></div>
          <div class="pi"><span class="pz">正文</span><svg class="rt"><use href="#i-ret"/></svg></div>
        </div>
        <div class="p-foot"><span>显示:</span><div class="p-combo"><span>有效样式</span><i class="caret"></i></div></div>
      </aside>
      <aside class="rail">
        <span class="rail-h"></span>
        <span class="ri ri-on"><svg width="18" height="18" viewBox="0 0 18 18"><path d="M4 11 13 2 16 5 7 14ZM1 16H17" fill="none" stroke="#444"/></svg></span>
        <span class="ri"><svg width="18" height="18" viewBox="0 0 18 18"><path d="M4 1V15L7.5 12 10 17 12 16 9.5 11H14Z" fill="none" stroke="#555"/></svg></span>
        <span class="ri"><svg width="18" height="18" viewBox="0 0 18 18"><circle cx="6" cy="11" r="5" fill="none" stroke="#555"/><path d="M7 6V2H16V11H11" fill="none" stroke="#555"/></svg></span>
        <span class="ri"><svg width="18" height="18" viewBox="0 0 18 18"><path d="M2 14 9 1 16 14Z M6 11 9 5 12 11M7 9H11M2 16H16" fill="none" stroke="#555"/></svg></span>
        <span class="ri"><svg width="18" height="18" viewBox="0 0 18 18"><rect x="1.5" y="2.5" width="15" height="13" fill="none" stroke="#555"/><path d="M1.5 6.5H16.5M1.5 11H16.5M6.5 6.5V15.5M11.5 6.5V15.5" stroke="#555"/></svg></span>
        <span class="ri"><svg width="18" height="18" viewBox="0 0 18 18"><path d="M2 4H16M2 9H16M2 14H16" stroke="#555"/><circle cx="12" cy="4" r="1.8" fill="#d8d8d8" stroke="#555"/><circle cx="5" cy="9" r="1.8" fill="#d8d8d8" stroke="#555"/><circle cx="9" cy="14" r="1.8" fill="#d8d8d8" stroke="#555"/></svg></span>
        <span class="ri"><svg width="18" height="18" viewBox="0 0 18 18"><path d="M3 17V1H11V5M3 5H16V17H3Z" fill="none" stroke="#555"/><path d="M5 15 9 10 11 12 13 9 15 12" fill="none" stroke="#555"/></svg></span>
        <span class="ri"><svg width="18" height="18" viewBox="0 0 18 18"><circle cx="4" cy="6" r="2.5" fill="none" stroke="#555"/><path d="M6.5 3V9M9 4H15L13 2M15 4 13 6M9 9H15V14H9ZM12 7V17" fill="none" stroke="#555"/></svg></span>
        <span class="ri"><svg width="18" height="18" viewBox="0 0 18 18"><path d="M2 2H16V5H2ZM3 5V16H15V5M6 9V11H12V9" fill="none" stroke="#555"/></svg></span>
        <span class="ri"><svg width="18" height="18" viewBox="0 0 18 18"><rect x="1.5" y="2.5" width="15" height="13" fill="none" stroke="#555"/><path d="M2 13 6 9 9 12 12 8 16 12" fill="none" stroke="#555"/><circle cx="7" cy="6" r="1" fill="#555"/></svg></span>
        <span class="ri"><svg width="18" height="18" viewBox="0 0 18 18"><path d="M9 1 16 5V13L9 17 2 13V5Z M9 5V11M6 9 9 12 12 9" fill="none" stroke="#555"/></svg></span>
        <span class="ri"><svg width="18" height="18" viewBox="0 0 18 18"><path d="M3 5A7 7 0 1 1 2 9M1 6 3 9 5 7M9 5V9L12 12" fill="none" stroke="#555"/></svg></span>
        <span class="ri ri-q"><svg width="18" height="18" viewBox="0 0 18 18"><circle cx="9" cy="9" r="8" fill="none" stroke="#555"/><path d="M6.5 7C6.5 4 12 4 12 7 12 9 9 9 9 11.5M9 13V14.5" fill="none" stroke="#555"/></svg></span>
        <span class="rail-sep"></span>
        <span class="rail-dots">•••</span>
      </aside>
    </div>

    <footer class="status">
      <span class="st s1">页码: 1</span><span class="st s2">页面: 1/6</span><span class="st s3">节: 1/5</span><span class="st s4">设置值: 1.9厘米</span><span class="st s5">行: 1</span><span class="st s6">列: 1</span><span class="st s7">字数: 674</span>
      <span class="st s8"><svg width="16" height="14" viewBox="0 0 16 14"><path d="M1 1H15V11H9L7 13V11H1ZM6 4 10 8M10 4 6 8" fill="none" stroke="#666"/></svg>文档校对</span>
      <span class="st s9"><svg width="14" height="16" viewBox="0 0 14 16"><path d="M7 1 13 3V8C13 12 10 14 7 15 4 14 1 12 1 8V3ZM4 8 6 10 10 5" fill="none" stroke="#888"/></svg>未认证</span>
      <div class="st-right">
        <span class="vi"><svg width="16" height="16" viewBox="0 0 16 16"><path d="M10 1H15V6M15 1 10 6M6 15H1V10M1 15 6 10M1 6V1H5M15 10V15H11" fill="none" stroke="#555"/></svg></span>
        <span class="vi"><svg width="18" height="16" viewBox="0 0 18 16"><path d="M9 3V15M9 3C7 1 4 1 1 1V13C4 13 7 13 9 15 11 13 14 13 17 13V1C14 1 11 1 9 3Z" fill="none" stroke="#444"/></svg></span>
        <span class="vi vi-on"><svg width="14" height="18" viewBox="0 0 14 18"><path d="M1 1H10L13 4V17H1ZM4 6H10M4 9H10M4 12H10" fill="none" stroke="#333"/></svg></span>
        <span class="vi"><svg width="16" height="18" viewBox="0 0 16 18"><rect x="1" y="1" width="14" height="16" rx="1" fill="none" stroke="#444"/><path d="M6 5H12M6 9H12M6 13H12M3 5H4M3 9H4M3 13H4" stroke="#444"/></svg></span>
        <span class="vi"><svg width="16" height="16" viewBox="0 0 16 16"><circle cx="8" cy="8" r="7" fill="none" stroke="#444"/><ellipse cx="8" cy="8" rx="3" ry="7" fill="none" stroke="#444"/><path d="M1 6H15M1 10H15" stroke="#444"/></svg></span>
        <span class="vi"><svg width="18" height="18" viewBox="0 0 18 18"><circle cx="9" cy="11" r="6" fill="none" stroke="#444"/><circle cx="9" cy="11" r="3" fill="none" stroke="#444"/><path d="M9 1V4M3 2 5 5M15 2 13 5" stroke="#444"/></svg></span>
        <span class="st-sep"></span>
        <span class="zoom-t">80%<i class="caret"></i></span>
        <span class="zoom-minus"></span>
        <div class="slider"><i class="knob"></i><i class="tick"></i></div>
      </div>
    </footer>
  </section>

  <div class="redbox"></div>
  <svg class="red-arrow" width="320" height="110" viewBox="0 0 320 110"><path d="M1 105.5 17 96 18 99.5 313 8.5 314 13.5 19 105 18 109Z" fill="#f01818"/></svg>

  <aside class="scrolltip">
    <div class="stip-row"><b>自动滚动模式</b><span class="stip-c">:</span><span>点击鼠标左键</span></div>
    <div class="stip-row"><b>自定义滚动模式</b><span class="stip-c">:</span><span>按住 Ctrl 键</span></div>
  </aside>
  <div class="activate"><div class="ac1">激活 Windows</div><div class="ac2">转到"设置"以激活 Windows。</div></div>

  <footer class="taskbar">
    <span class="start"><svg width="18" height="18" viewBox="0 0 18 18"><path d="M0 2.5 7.5 1.4V8.5H0ZM8.5 1.2 18 0V8.5H8.5ZM0 9.5H7.5V16.6L0 15.5ZM8.5 9.5H18V18L8.5 16.8Z" fill="#fff"/></svg></span>
    <span class="taskview"><svg width="18" height="18" viewBox="0 0 18 18"><path d="M1 4H12V14H1ZM1 1H12M1 17H12M15 1V3M15 5H17V8M15 10H17V13H15" fill="none" stroke="#fff" stroke-width="1.3"/></svg></span>
    <div class="ti ti0"><svg width="24" height="24"><use href="#i-swirl"/></svg><span>九价HPV疫苗现拥...</span></div>
    <div class="ti ti1"><svg width="20" height="24"><use href="#i-ding"/></svg><span>钉钉</span></div>
    <div class="ti"><svg width="24" height="24"><use href="#i-wechat"/></svg><span>微信</span></div>
    <div class="ti"><svg width="24" height="24" viewBox="0 0 24 24"><rect width="24" height="24" fill="#f4f4f4"/><path d="M3 6H13L9 22H5L8 10H3Z" fill="#2a94c8"/><path d="M10 2H18C24 2 23 12 16 13L22 22H16L12 14Z" fill="#38ad4c"/></svg><span>一键排版助手(MyE...</span></div>
    <div class="ti"><svg width="22" height="20" viewBox="0 0 22 20"><rect x="1" y="1" width="20" height="18" fill="#cfe6f8" stroke="#ddd"/><path d="M1 13 8 8 14 12 21 9V19H1Z" fill="#4e9a7a"/></svg><span>图片</span></div>
    <div class="ti ti-act"><svg width="24" height="24"><use href="#i-wpshex"/></svg><span>新文档.docx (只读)...</span></div>
    <div class="tray">
      <span class="tr-i"><svg width="14" height="8" viewBox="0 0 14 8"><path d="M1 7 7 1 13 7" fill="none" stroke="#fff" stroke-width="1.4"/></svg></span>
      <span class="tr-i"><svg width="16" height="20" viewBox="0 0 16 20"><path d="M8 0 16 4V15L8 20 0 15V4Z" fill="#e8f1fb"/><path d="M8 3 14 6 8 9 2 6ZM2 9 8 12 14 9 8 15 2 12Z" fill="#2e86e0"/></svg></span>
      <span class="tr-i"><svg width="18" height="18" viewBox="0 0 18 18"><path d="M6 3H17V13H6M1 1H5V7H1ZM3 7V16M1 16H12M11 13V16" fill="none" stroke="#fff"/></svg></span>
      <span class="tr-i"><svg width="18" height="16" viewBox="0 0 18 16"><path d="M1 5H4L8 1V15L4 11H1ZM11 5C12 7 12 9 11 11M13 3C15 6 15 10 13 13" fill="none" stroke="#fff"/></svg></span>
      <span class="tr-i tr-zh">中</span>
      <span class="tr-s"><svg width="22" height="22" viewBox="0 0 22 22"><path d="M2 6 14 1 20 14 8 21Z" fill="#e8541c"/><path d="M15 6C11 5 7 7 8 10S15 11 15 14 9 18 6 16" fill="none" stroke="#fff" stroke-width="2.5"/></svg></span>
      <div class="clock"><span>16:27</span><span>2023/2/6</span></div>
      <span class="tr-n"><svg width="18" height="18" viewBox="0 0 18 18"><path d="M1 1H17V14H10L8 17 7 14H1Z" fill="none" stroke="#fff"/></svg></span>
    </div>
  </footer>

  <div class="wm">
    <svg class="wm-logo" width="44" height="44" viewBox="0 0 44 44"><path d="M42 2C22 4 4 18 2 30 2 36 8 40 14 40 6 36 6 28 14 20 22 12 32 6 42 2Z" fill="#2f6fbe" opacity=".8"/><path d="M38 14C40 24 30 38 14 40 28 40 42 30 42 18 42 16 40 14 38 14Z" fill="#2e9a52" opacity=".7"/></svg>
    <div class="wm-text"><div class="wm1">极光下载站</div><div class="wm2">www.xz7.com</div></div>
  </div>
</main>
</body>
</html>
```
FILE: styles.css
```css
*{box-sizing:border-box}
html,body{margin:0;padding:0;width:1920px;height:1080px;overflow:hidden}
body{font-family:"Noto Sans CJK SC","Liberation Sans",sans-serif;font-size:12px;color:#333}
i{font-style:normal}
.sprite{position:absolute;width:0;height:0;overflow:hidden}
.desktop{position:relative;width:1920px;height:1080px;overflow:hidden;
  background:linear-gradient(180deg,rgba(0,20,80,.22) 0,rgba(0,20,80,0) 45%),linear-gradient(90deg,#00b2f8 0,#00aef6 45%,#0090e4 58%,#0460cc 70%,#0442b8 88%,#0440b8 100%)}

/* desktop icons */
.dgrid{position:absolute;left:0;top:7px;display:grid;grid-auto-flow:column;grid-template-columns:repeat(4,76px);grid-template-rows:repeat(10,101px)}
.dt{display:flex;flex-direction:column;align-items:center;width:76px}
.dw{position:relative;width:48px;height:48px;flex:none}
.di{display:block;width:48px;height:48px}
.sc{position:absolute;left:0;bottom:0;width:13px;height:13px}
.dl{margin-top:3px;line-height:17px;color:#fff;text-align:center;white-space:nowrap;font-size:12px;text-shadow:1px 1px 2px #000,0 0 3px rgba(0,0,0,.8)}

.upload{position:absolute;left:1712px;top:32px;width:128px;height:31px;display:flex;border-radius:6px;overflow:hidden;background:#eaf7ff;border:1px solid #14a0ff}
.upload-ico{width:36px;background:#0a96ff;display:flex;align-items:center;justify-content:center}
.upload-txt{flex:1;text-align:center;line-height:29px;color:#1a9cff;font-size:12px}
.float-bird{position:absolute;left:1797px;top:132px}

/* background window */
.bgwin{position:absolute;left:1500px;top:186px;width:282px;height:598px;background:#fff;box-shadow:0 1px 3px rgba(0,0,30,.5);display:flex;flex-direction:column}
.bg-title{height:31px;position:relative;flex:none}
.bg-min{position:absolute;left:162px;top:9px}
.bg-max{position:absolute;left:207px;top:9px}
.bg-close{position:absolute;left:253px;top:9px}
.bg-body{height:543px;background:#efefef;padding:20px 4px 0 0;flex:none}
.bg-frame{height:523px;background:#cfcfcf;border:1px solid #fff;outline:1px solid #ccc;display:flex;flex-direction:column;padding:4px 3px 6px 0}
.bg-row{height:27px;background:#f0f0f0;border-bottom:2px solid #a9a9a9;border-right:2px solid #aaa;flex:none}
.bg-white{flex:1;background:#fff;margin-right:3px}
.bg-foot{height:56px;background:#cfcfcf;flex:none;padding-left:128px;display:flex;flex-direction:column}
.bg-line{height:26px;display:flex;align-items:center;justify-content:space-between;font-size:12px;color:#222;white-space:nowrap;padding-left:32px}
.bg-next{width:16px;height:18px;background:#e6e6e6;border:1px solid #aaa;font-size:8px;line-height:16px;text-align:center;color:#555}
.bg-btns{display:flex;justify-content:space-between;margin-top:4px}
.bg-btn{height:22px;background:#e4e4e4;border:1px solid #888;line-height:20px;text-align:center;color:#222;font-size:12px}
.b1{width:64px}
.b2{width:77px;margin-right:-1px}

/* WPS window */
.wps{position:absolute;left:260px;top:20px;width:1400px;height:1000px;display:flex;flex-direction:column;box-shadow:0 0 10px rgba(0,0,0,.45)}
.titlebar{height:48px;background:#3e414e;display:flex;align-items:flex-end;padding-left:3px;flex:none;position:relative}
.tab-wps{width:71px;height:30px;background:#4a6a9c;border-radius:6px 6px 0 0;display:flex;align-items:center;gap:5px;padding-left:10px;color:#e6eaf2;font-size:12px}
.tab-doc{width:250px;height:30px;margin-left:3px;background:#e6e6e6;border-radius:6px 6px 0 0;display:flex;align-items:center;padding-left:11px;position:relative}
.tab-name{margin-left:7px;color:#5b8bd8;font-size:12px}
.tab-pin{position:absolute;left:206px;top:8px}
.tab-x{position:absolute;left:228px;top:9px}
.tab-plus{margin-left:18px;height:30px;color:#c9ccd4;font-size:22px;line-height:28px;font-weight:300}
.title-right{position:absolute;right:0;top:0;bottom:0;width:160px}
.winbtns{position:absolute;top:3px;right:8px;display:flex;gap:19px}
.userbar{position:absolute;left:11px;top:24px;right:0;height:20px;display:flex;align-items:center}
.badge1{width:16px;height:18px;background:#9a9a9e;color:#fff;text-align:center;line-height:18px;border-radius:1px;font-size:12px}
.badge-lines{width:4px;height:18px;margin-left:1px;border-left:1px solid #9a9a9e;border-right:1px solid #9a9a9e}
.shirt{margin-left:19px}
.usep{width:1px;height:20px;background:#55585f;margin-left:17px}
.avatar{margin-left:9px}
.uname{margin-left:8px;color:#a8abb3;font-size:12px}

.menubar{height:38px;background:#e6e6e6;border-bottom:1px solid #d4d4d4;display:flex;align-items:center;flex:none;padding-left:15px}
.mfile{margin-left:4px;width:24px}
.msep{width:1px;height:22px;background:#c6c6c6;margin-left:11px;margin-right:5px}
.qi{width:25px;display:flex;align-items:center;justify-content:center;position:relative}
.qi-dis{width:32px}
.qi-dis .caret{margin-left:1px}
.qi-more{width:24px}
.mi-burger{flex:none}
.mpill{width:44px;height:20px;border-radius:10px;background:#5b92e5;color:#fff;font-weight:700;text-align:center;line-height:20px;margin-left:9px;font-size:12px}
.mtab{margin-left:26px;color:#333;font-size:12px;white-space:nowrap;line-height:20px}
.mpill+.mtab{margin-left:16px}
.mtab-s{margin-left:29px}
.msearch{margin-left:28px}
.mtext{color:#333;font-size:12px;white-space:nowrap;margin-left:1px}
.mright{margin-left:auto;display:flex;align-items:center;padding-right:15px}
.mright .mtext{margin-left:5px}
.mright .caret{margin-left:3px}
.mr-cloud{margin-left:9px}
.msep2{width:1px;height:22px;background:#c6c6c6;margin-left:5px}
.mq{margin-left:12px;font-size:16px;color:#444;width:10px;text-align:center}
.mdots{margin-left:13px;font-size:16px;color:#444;width:14px;text-align:center;font-family:"DejaVu Sans",sans-serif}
.mright svg:last-child{margin-left:12px}

.caret{display:inline-block;width:0;height:0;border-left:3px solid transparent;border-right:3px solid transparent;border-top:3.5px solid #888;flex:none}
.caret.lite{border-top-color:#bbb}
.caret.dark{border-top-color:#666;border-left-width:4px;border-right-width:4px;border-top-width:5px}
.cw8{margin:0 1px}
.cw10{margin:0 2px}

.toolbar{height:69px;background:#e6e6e6;display:flex;flex:none;box-shadow:0 1px 3px rgba(0,0,0,.1)}
.grp{position:relative;height:63px;margin-top:3px;border-right:1px solid #d0d0d0}
.g-clip{width:158px;display:flex;padding-left:10px}
.bigcol{display:flex;flex-direction:column;align-items:center;height:63px;padding-top:3px}
.bigcol svg{flex:none;height:32px}
.biglab{margin-top:0;line-height:16px;white-space:nowrap;color:#333;font-size:12px;display:flex;align-items:center;gap:3px}
.c-paste{width:36px}
.c-brush{width:38px;margin-left:8px}
.clipcol{width:46px;margin-left:10px;display:flex;flex-direction:column;gap:9px;padding-top:7px}
.clipitem{display:flex;align-items:center;gap:3px;color:#b0b0b0;height:18px;white-space:nowrap;font-size:12px}
.g-font{width:323px;padding:4px 0 0 5px}
.row{display:flex;align-items:center;height:24px;margin-bottom:2px}
.combo{width:194px;height:24px;background:#f0f0f0;border:1px solid #b8b8b8;border-radius:4px;display:flex;margin-right:2px}
.cb-a{width:114px;border-right:1px solid #b8b8b8;display:flex;align-items:center;justify-content:space-between;padding:0 4px 0 5px;font-size:12px}
.cb-b{flex:1;display:flex;align-items:center;justify-content:space-between;padding:0 4px 0 3px;font-size:12px}
.tb{display:flex;align-items:center;justify-content:center;height:24px;flex:none;position:relative}
.w16{width:16px}.w24{width:24px}.w26{width:26px}.w28{width:28px}.w29{width:29px}.w36{width:36px}
.ml3{margin-left:3px}.ml4{margin-left:4px}.ml6{margin-left:6px}.ml8{margin-left:8px}.ml9{margin-left:9px}
.wen{position:absolute;left:3px;top:0;font-size:8px;color:#2f7be8;font-weight:400;line-height:10px}
.fmt-b{font-weight:700;font-size:15px;font-family:"Liberation Sans",sans-serif;color:#444}
.fmt-i{font-style:italic;font-size:15px;font-family:"Liberation Serif",serif;color:#444}
.fmt-u{font-size:14px;color:#444;font-family:"Liberation Sans",sans-serif;text-decoration:underline;text-decoration-color:#2f7be8}
.tb-shade{background:#cdcdcd;border-radius:2px;width:16px;margin:0 4px}
.tb-on{background:#b4b4b4;border-radius:3px;height:24px}
.launch{position:absolute;right:5px;bottom:3px;width:5px;height:5px;border-right:1px solid #888;border-bottom:1px solid #888}
.g-para{width:259px;padding:4px 0 0 5px}
.g-style{width:345px;padding:7px 0 0 5px;display:flex}
.g-style .bigcol{margin-top:-7px}
.gallery{width:273px;height:49px;background:#f0f0f0;border:1px solid #bbb;border-radius:4px;display:flex;overflow:hidden}
.gi{display:flex;flex-direction:column;align-items:center;overflow:hidden;flex:none;height:47px}
.gi0{width:66px}.gi1{width:65px}.gi2{width:64px}.gi3{width:64px}
.gp{height:28px;line-height:28px;white-space:nowrap;color:#111;font-family:"Liberation Sans",sans-serif}
.p0{font-size:12px;letter-spacing:-.3px}
.p1{font-size:26px;font-weight:700}
.p2{font-size:20px;font-weight:700}
.p3{font-size:17px;font-weight:700}
.gl{line-height:16px;font-size:12px;color:#444}
.gscroll{width:12px;flex:none;border-left:1px solid #ddd;display:flex;flex-direction:column}
.gscroll span{flex:1;display:flex;align-items:center;justify-content:center;border-bottom:1px solid #ddd}
.gscroll .up::before{content:"";border-left:3px solid transparent;border-right:3px solid transparent;border-bottom:4px solid #bbb}
.gscroll .dn::before{content:"";border-left:3px solid transparent;border-right:3px solid transparent;border-top:4px solid #666}
.gscroll .more::before{content:"";border-left:3px solid transparent;border-right:3px solid transparent;border-top:4px solid #888}
.c-new{width:50px;margin-left:6px}
.g-find{width:128px;display:flex;padding-left:15px}
.c-find{width:56px}
.c-sel{width:36px;margin-left:11px}

.mainrow{height:815px;display:flex;flex:none;position:relative}
.editor{width:1088px;background:#dfdfdf;padding:16px 0 0 228px;position:relative;flex:none;overflow:hidden}
.page{display:block;width:634px;height:799px;background:#fff;box-shadow:0 0 10px rgba(0,0,0,.35);position:relative;overflow:hidden;color:#111}
.crop{position:absolute;top:39px;width:18px;height:18px}
.crop-l{left:77px;border-right:1px solid #aaa;border-bottom:1px solid #aaa}
.crop-r{left:629px;border-left:1px solid #aaa;border-bottom:1px solid #aaa}
.hdr-ico{position:absolute;left:39px;top:53px}
.hdr-caret{position:absolute;left:56px;top:60px}
.hdr{padding:54px 0 0 95px;height:79px}
.hdr-co{width:445px;height:16px;line-height:14px;font-size:9.5px;border-bottom:2px solid #888;white-space:nowrap}
.hdr-rt{margin-top:-5px;line-height:12px;font-size:9.5px}
.doc-title{margin:28px 0 0;padding-left:184px;height:34px;line-height:34px;font-size:25.5px;font-weight:400;white-space:nowrap}
.doc-title em{font-family:"DejaVu Sans",sans-serif;font-size:27px;margin:0 -1px 0 2px}
.doc-ver{margin-top:3px;height:26px;padding-left:382px;line-height:26px;font-size:21px;font-style:italic;font-family:"DejaVu Sans",sans-serif;letter-spacing:3.6px;white-space:nowrap}
.doc-h2{margin:99px 0 0;padding-left:259px;height:32px;line-height:32px;font-size:24px;font-weight:400}
.lk-row{height:33px;display:grid;grid-template-columns:220px 194px 1fr;padding-left:95px;align-items:center;color:#0563c1;font-size:15px;line-height:33px;white-space:nowrap}
.doc-h2+.lk-row{margin-top:18.5px}
.lk-last{margin-top:2.5px}
.lk em{font-family:"DejaVu Sans",sans-serif;font-size:16px;margin-left:4px}
.lk-l{text-align:center}
.lk-l4{padding-left:20px}
.lk-l4 u{text-underline-offset:3px}
.strike{text-decoration:line-through;text-decoration-color:rgba(5,99,193,.7)}
.lk-r2{padding-left:2px}
.lk-r3{padding-left:55px}
.lk-m{display:block;height:2px;background:#7ba8c8;margin-bottom:3px}
.m1{width:97px;margin-left:65px}
.m2{width:94px;margin-left:67px}
.m3{width:64px;margin-left:84px}
.m4{width:90px;margin-left:69px}
.doc-toc{margin:78px 0 0;padding-left:297px;height:30px;line-height:30px;font-size:22px;font-weight:400}
.toc{margin-top:25px;padding-left:95px;font-size:12px;color:#111}
.tr{display:flex;align-items:center;height:23.25px;line-height:23px;white-space:nowrap}
.tt{flex:none}
.td{flex:1;border-bottom:1px dotted #222;height:1px;margin:9px 3px 0 1px}
.r0{width:457px}
.r1{margin-left:13px;width:438px}
.r2{margin-left:13px;width:437px}
.r3{margin-left:13px;width:431px}
.r4{width:449px}
.pin{position:absolute;left:1053px;top:4px;width:31px;height:24px;background:#fff;border-left:2px solid #3a86e0;display:flex;align-items:center;justify-content:center}

.vscroll{width:16px;background:#cdcdcd;position:relative;flex:none}
.vs-top{position:absolute;left:5px;top:1px;border-left:3px solid transparent;border-right:3px solid transparent;border-top:4px solid #999}
.vs-ruler{position:absolute;left:2px;top:7px}
.vs-up{position:absolute;left:5px;top:26px;border-left:3px solid transparent;border-right:3px solid transparent;border-bottom:4px solid #999}
.vs-thumb{position:absolute;left:2px;top:39px;width:12px;height:99px;background:#e8e8e8;border:1px solid #aaa;border-radius:6px}
.vs-dn{position:absolute;left:5px;top:748px;border-left:3px solid transparent;border-right:3px solid transparent;border-top:4px solid #888}
.vs-b1{position:absolute;left:2px;top:761px}
.vs-b2{position:absolute;left:2px;top:780px}
.vs-b3{position:absolute;left:2px;top:798px}

.panel{width:261px;background:#e4e4e4;padding:0 0 0 12px;flex:none;display:flex;flex-direction:column}
.p-title{height:39px;display:flex;align-items:center;gap:4px;color:#555;padding-bottom:9px;margin-left:-3px;position:relative;font-size:12px;flex:none}
.p-x{position:absolute;left:232px;top:9px}
.p-select{width:235px;height:31px;background:#fff;border:1px solid #d4d4d4;border-radius:2px;display:flex;align-items:center;justify-content:space-between;padding:0 8px 0 6px;font-size:13px;letter-spacing:.8px;color:#111;flex:none}
.p-btns{display:flex;gap:11px;margin-top:7px;flex:none}
.p-btn{width:77px;height:23px;background:#f2f2f2;border:1px solid #d4d4d4;border-radius:2px;text-align:center;line-height:21px;color:#777;font-size:12px}
.p-link{height:48px;line-height:62px;color:#3f80d8;font-size:14px;flex:none}
.p-list{width:235px;height:613px;background:#fff;border:1px solid #d4d4d4;border-radius:2px;padding:2px 0 0 1px;flex:none}
.pi{height:34px;width:222px;display:flex;align-items:center;justify-content:space-between;padding:0 4px 0 5px;color:#111}
.rt{width:12px;height:12px;margin-top:-8px;flex:none}
.pn{font-family:"Liberation Sans",sans-serif;font-size:13.5px}
.ph{font-weight:700;font-family:"Noto Sans CJK SC","Liberation Sans",sans-serif;line-height:30px;white-space:nowrap}
.h1{font-size:21px}.h2{font-size:20px}.h3{font-size:20px}.h4{font-size:18px}
.pd{font-size:13px;letter-spacing:.8px}
.pz{font-size:14px}
.pa{text-decoration:underline;font-size:11px;margin-top:-8px;margin-right:2px}
.sel{height:32px;margin:1px 0;border:1px solid #9cc0e8;padding-left:4px}
.p-foot{display:flex;align-items:center;height:40px;color:#444;font-size:12px;flex:none}
.p-combo{width:202px;height:23px;margin-left:6px;background:#fff;border:1px solid #d4d4d4;border-radius:4px;display:flex;align-items:center;justify-content:space-between;padding:0 6px 0 3px}

.rail{width:35px;background:#d8d8d8;display:flex;flex-direction:column;align-items:center;flex:none;box-shadow:-1px 0 0 #ddd;padding-right:2px}
.rail-h{width:17px;height:5px;margin-top:11px;border-top:1px solid #bbb;border-bottom:1px solid #bbb;flex:none;margin-bottom:16px}
.ri{width:24px;height:24px;display:flex;align-items:center;justify-content:center;margin-bottom:12.1px;flex:none}
.ri-on{background:#b4b4b4;border-radius:4px}
.ri-q{margin-bottom:9px}
.rail-sep{width:30px;height:1px;background:#c8c8c8;flex:none}
.rail-dots{color:#999;font-size:8px;margin-top:18px;letter-spacing:0}

.status{height:30px;background:#e6e6e6;display:flex;align-items:center;flex:none;color:#555;font-size:12px;padding-left:9px;position:relative;border-top:1px solid #d4d4d4}
.st{display:flex;align-items:center;gap:4px;white-space:nowrap;height:28px}
.s1{width:44px;border-right:1px solid #d4d4d4}
.s2{width:65px;padding-left:9px;border-right:1px solid #d4d4d4}
.s3{width:61px;padding-left:9px}
.s4{width:89px;border-right:1px solid #d4d4d4}
.s5{width:47px;padding-left:11px}
.s6{width:38px;border-right:1px solid #d4d4d4}
.s7{width:67px;padding-left:9px;border-right:1px solid #d4d4d4}
.s8{width:87px;padding-left:10px;border-right:1px solid #d4d4d4}
.s9{padding-left:13px}
.st-right{position:absolute;left:953px;top:0;height:28px;display:flex;align-items:center}
.vi{width:25.6px;height:28px;display:flex;align-items:center;justify-content:center;flex:none}
.vi-on{background:#bdbdbd;border-radius:3px;width:23px;margin:0 1.3px}
.st-sep{width:1px;height:22px;background:#d4d4d4;margin-left:8px}
.zoom-t{margin-left:11px;display:flex;align-items:center;gap:5px;width:36px}
.zoom-minus{width:15px;height:2px;background:#666;margin-left:6px}
.slider{width:135px;height:1px;margin-left:8px;position:relative;background:linear-gradient(90deg,#666 0,#666 40%,#bbb 40%)}
.knob{position:absolute;left:53px;top:-6px;width:13px;height:13px;border-radius:50%;background:#eee;border:1px solid #555}
.tick{position:absolute;left:68px;top:-3px;width:1px;height:7px;background:#bbb}

.redbox{position:absolute;left:260px;top:175px;width:1088px;height:816px;border:4px solid #f00;pointer-events:none}
.red-arrow{position:absolute;left:1358px;top:372px}

.scrolltip{position:absolute;left:1601px;top:973px;width:278px;height:67px;background:#34689f;border:2px solid #e8eef5;padding:6px 0 0 14px;color:#fff;font-size:12px}
.stip-row{display:flex;height:24px;line-height:24px;white-space:nowrap}
.stip-row b{width:119px;color:#ff0;font-weight:700;font-size:13px}
.stip-c{width:14px}
.activate{position:absolute;left:1631px;top:940px;color:rgba(195,195,195,.62)}
.ac1{font-size:21px;line-height:32px}
.ac2{font-size:15px;line-height:20px;white-space:nowrap}

.taskbar{position:absolute;left:0;top:1040px;width:1920px;height:40px;background:linear-gradient(90deg,#24333f,#24333f 55%,#1c2a42);display:flex;align-items:stretch}
.start{width:48px;display:flex;align-items:center;justify-content:center}
.taskview{width:55px;display:flex;align-items:center;padding-left:15px}
.ti{width:152px;display:flex;align-items:center;gap:4px;padding-left:5px;color:#fff;font-size:12px;border-bottom:2px solid #6cb0e8;margin-right:10px;white-space:nowrap;overflow:hidden}
.ti svg{flex:none}
.ti0{width:152px;margin-right:9px;padding-left:7px}
.ti-act{background:#4a5b68;margin:0 0 0 -5px;padding-left:10px;gap:3px;width:160px}
.tray{margin-left:auto;width:280px;display:flex;align-items:center;flex:none;position:relative}
.tr-i{width:24px;display:flex;align-items:center;justify-content:center;flex:none;color:#fff}
.tr-zh{font-size:15px}
.tr-s{width:32px;display:flex;justify-content:center;flex:none}
.clock{width:76px;color:#e8ebee;text-align:center;display:flex;flex-direction:column;font-size:13px;line-height:20px;flex:none}
.tr-n{width:38px;display:flex;justify-content:center;flex:none}

.wm{position:absolute;left:1765px;top:1028px;display:flex;pointer-events:none}
.wm-logo{margin-top:4px}
.wm-text{margin-left:-4px}
.wm1{font-size:21px;line-height:26px;font-weight:700;color:#2b6cc4;opacity:.85;white-space:nowrap}
.wm2{font-size:19px;line-height:24px;color:#2f8f55;opacity:.85;font-family:"Liberation Sans",sans-serif}
```
